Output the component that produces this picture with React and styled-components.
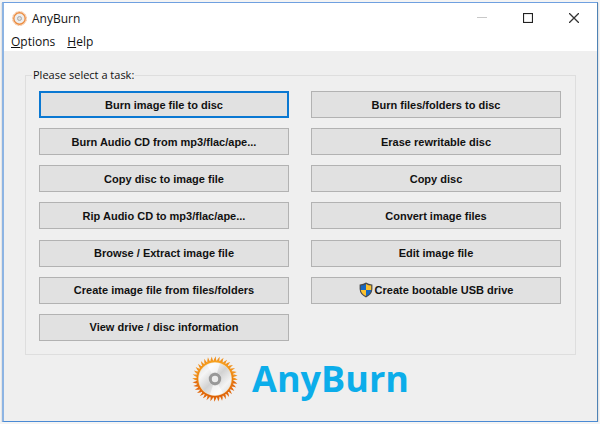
import React from 'react';
import styled, { createGlobalStyle } from 'styled-components';

const GlobalStyle = createGlobalStyle`
  * {
    box-sizing: border-box;
  }
  body {
    margin: 0;
    background-color: #f4f4f4;
    font-family: "Open Sans", "Noto Sans", sans-serif;
    color: #111;
  }
`

const Window = styled.main`
  margin: 2px;
  margin-bottom: 0;
  min-height: calc(100vh - 4px);
  display: flex;
  flex-direction: column;
  background-color: #efefef;
  border: 1px solid #4a8ad4;
  border-left: 2px solid #8db4e3;
  border-top: 1px solid #6fa0e0;
  border-right-color: #4f83b5;
  box-shadow: 0 1px 1px #9a9a9a;
`

const TitleBar = styled.header`
  height: 30px;
  padding-left: 8px;
  display: flex;
  align-items: center;
  background-color: white;
`

const Title = styled.h1`
  flex: 1;
  margin: 0 0 0 5px;
  font-size: 12px;
  font-weight: 400;
`

const WindowButton = styled.button`
  width: 46px;
  height: 30px;
  padding: 0;
  border: none;
  display: flex;
  align-items: center;
  justify-content: center;
  background-color: transparent;
`

const Menu = styled.nav`
  height: 18px;
  padding: 0 7px;
  display: flex;
  align-items: center;
  gap: 12px;
  background-color: white;
`

const MenuItem = styled.a`
  font-size: 12px;
  line-height: 16px;
  color: #111;
  text-decoration: none;
`

const Content = styled.div`
  flex: 1;
  padding: 16px 21px 0;
`

const TaskGroup = styled.fieldset`
  min-width: 0;
  margin: 0;
  padding: 8px 14px 13px 13px;
  border: 1px solid #dedede;
`

const Legend = styled.legend`
  margin-left: -7px;
  padding: 0 1px;
  font-size: 11px;
  line-height: 16px;
`

const TaskGrid = styled.div`
  min-height: 250px;
  display: grid;
  grid-template-columns: 1fr 1fr;
  column-gap: 22px;
  align-content: space-between;
`

const TaskButton = styled.button`
  height: 27px;
  padding: 0;
  display: flex;
  align-items: center;
  justify-content: center;
  gap: 2px;
  border: ${props => props.$selected ? "2px solid #0a78d2" : "1px solid #b2b2b2"};
  background-color: #e1e1e1;
  color: #111;
  font-family: "Liberation Sans", Arial, sans-serif;
  font-size: 11px;
  font-weight: bold;
`

const Brand = styled.footer`
  display: flex;
  align-items: center;
  justify-content: center;
  gap: 14px;
`

const BrandName = styled.span`
  color: #0cadea;
  font-size: 36px;
  font-weight: 700;
  line-height: 48px;
`

const tasks = [
  "Burn image file to disc",
  "Burn files/folders to disc",
  "Burn Audio CD from mp3/flac/ape...",
  "Erase rewritable disc",
  "Copy disc to image file",
  "Copy disc",
  "Rip Audio CD to mp3/flac/ape...",
  "Convert image files",
  "Browse / Extract image file",
  "Edit image file",
  "Create image file from files/folders",
  "Create bootable USB drive",
  "View drive / disc information",
];

// 36 thin flames around the rim
const flames = Array.from({ length: 36 }, (_, i) => i * 10);

const DiscLogo = () => (
  <svg width="46" height="46" viewBox="0 0 46 46" aria-hidden="true">
    <defs>
      <linearGradient id="flame" x1="0" y1="0" x2="0" y2="1">
        <stop offset="0" stopColor="#f8a11c" />
        <stop offset="1" stopColor="#dc5f08" />
      </linearGradient>
      <linearGradient id="plate" x1="0" y1="0" x2="1" y2="1">
        <stop offset="0" stopColor="#dedede" />
        <stop offset="0.25" stopColor="#f5f5f5" />
        <stop offset="0.5" stopColor="#d2d2d2" />
        <stop offset="0.75" stopColor="#f3f3f3" />
        <stop offset="1" stopColor="#dadada" />
      </linearGradient>
    </defs>
    <g>
      {flames.map(angle => (
        <path
          key={angle}
          d="M21.3 6 Q21.7 3 23.8 0.2 Q23.7 3 24.7 6 Z"
          fill={angle > 90 && angle < 270 ? "#e2690c" : "#f0921f"}
          transform={`rotate(${angle} 23 23)`}
        />
      ))}
    </g>
    <circle cx="23" cy="23" r="18.4" fill="url(#flame)" />
    <circle cx="23" cy="23" r="16.8" fill="#f5dcae" />
    <circle cx="23" cy="23" r="16.2" fill="url(#plate)" />
    <path d="M23 23 L15 8.9 A16.2 16.2 0 0 1 28 7.6 Z" fill="#fff" opacity="0.6" />
    <path d="M23 23 L31 37.1 A16.2 16.2 0 0 1 18 38.4 Z" fill="#fff" opacity="0.6" />
    <circle cx="23" cy="23" r="6.8" fill="#dedede" />
    <circle cx="23" cy="23" r="4.7" fill="#ececec" stroke="#989898" strokeWidth="3" />
  </svg>
)

const DiscIcon = () => (
  <svg width="15" height="15" viewBox="0 0 15 15" aria-hidden="true">
    <circle cx="7.5" cy="7.5" r="6.9" fill="none" stroke="#f2a466" strokeWidth="1" strokeDasharray="1 0.6" />
    <circle cx="7.5" cy="7.5" r="5.7" fill="#ededed" stroke="#ec8c40" strokeWidth="1.4" />
    <circle cx="7.5" cy="7.5" r="2" fill="#ddd" stroke="#aaa" />
  </svg>
)

const ShieldIcon = () => (
  <svg width="14" height="16" viewBox="0 0 14 16" aria-hidden="true">
    <path d="M7 0.6 Q9.6 2.5 13.4 2.4 V7 Q13.2 12.6 7 15.4 Q0.8 12.6 0.6 7 V2.4 Q4.4 2.5 7 0.6 Z" fill="#4b4b4b" />
    <path d="M7 2 V8 H1.8 V3.5 Q4.6 3.5 7 2 Z" fill="#1767c1" />
    <path d="M7 2 V8 H12.2 V3.5 Q9.4 3.5 7 2 Z" fill="#fbc12f" />
    <path d="M1.8 8 H7 V14.1 Q2.4 12 1.8 8 Z" fill="#fbc12f" />
    <path d="M12.2 8 H7 V14.1 Q11.6 12 12.2 8 Z" fill="#1767c1" />
  </svg>
)

export default function App() {
  return (
    <>
      <GlobalStyle />
      <Window>
        <TitleBar>
          <DiscIcon />
          <Title>AnyBurn</Title>
          <WindowButton aria-label="Minimize">
            <svg width="10" height="10" viewBox="0 0 10 10">
              <path d="M0 4.5 H10" stroke="#c8c8c8" />
            </svg>
          </WindowButton>
          <WindowButton aria-label="Maximize">
            <svg width="10" height="10" viewBox="0 0 10 10">
              <rect x="0.5" y="0.5" width="9" height="9" fill="none" stroke="#222" strokeWidth="1.2" />
            </svg>
          </WindowButton>
          <WindowButton aria-label="Close">
            <svg width="10" height="10" viewBox="0 0 10 10">
              <path d="M0 0 L10 10 M10 0 L0 10" stroke="#333" strokeWidth="1.3" />
            </svg>
          </WindowButton>
        </TitleBar>
        <Menu>
          <MenuItem href="#options"><u>O</u>ptions</MenuItem>
          <MenuItem href="#help"><u>H</u>elp</MenuItem>
        </Menu>
        <Content>
          <TaskGroup>
            <Legend>Please select a task:</Legend>
            <TaskGrid>
              {tasks.map((task, i) => (
                <TaskButton key={task} type="button" $selected={i === 0}>
                  {/* needs admin rights */}
                  {task === "Create bootable USB drive" && <ShieldIcon />}
                  {task}
                </TaskButton>
              ))}
            </TaskGrid>
          </TaskGroup>
          <Brand>
            <DiscLogo />
            <BrandName>AnyBurn</BrandName>
          </Brand>
        </Content>
      </Window>
    </>
  )
}
